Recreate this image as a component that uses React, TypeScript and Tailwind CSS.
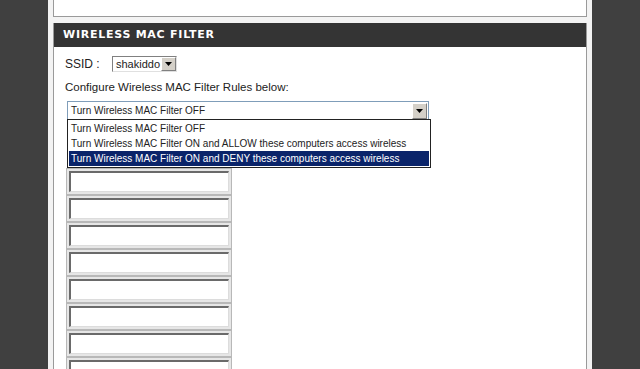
const font = { fontFamily: '"Liberation Sans", Arial, sans-serif' };

function Arrow() {
  return (
    <div className="flex h-full w-[15px] items-center justify-center border border-t-white border-l-white border-r-[#808080] border-b-[#808080] bg-[#d4d0c8]">
      <svg width="7" height="4" viewBox="0 0 7 4">
        <path d="M0 0H7L3.5 4Z" fill="#000" />
      </svg>
    </div>
  );
}

const options = [
  "Turn Wireless MAC Filter OFF",
  "Turn Wireless MAC Filter ON and ALLOW these computers access wireless",
  "Turn Wireless MAC Filter ON and DENY these computers access wireless",
];

export default function App() {
  return (
    <div className="flex h-[369px] w-[640px] overflow-hidden bg-[#f3f3f3] text-[10px] text-[#222]" style={font}>
      <div className="w-[48px] shrink-0 bg-[#404040]" />
      <div className="w-[5px] shrink-0" />
      <div className="flex w-[534px] shrink-0 flex-col">
        <div className="h-[17px] shrink-0 border-x border-b border-[#9a9a9a] bg-white" />
        <div className="h-[6px] shrink-0" />
        <div className="flex flex-1 flex-col border-x border-[#9a9a9a] bg-white">
          <div className="flex h-[24px] shrink-0 items-center bg-[#343434] pl-[9px]">
            <span className="text-[11px] font-bold tracking-[0.75px] text-white" style={{ fontFamily: '"DejaVu Sans", Verdana, sans-serif' }}>
              WIRELESS MAC FILTER
            </span>
          </div>
          <div className="flex flex-col pl-[11px] pt-[9px]">
            <div className="flex h-[16px] items-center">
              <span className="w-[47px] text-[12px]">SSID :</span>
              <div className="flex h-[16px] items-center border border-t-[#808080] border-l-[#808080] border-r-[#e0e0e0] border-b-[#e0e0e0] bg-white pl-[3px]">
                <span className="w-[45px] text-[11px]">shakiddo</span>
                <Arrow />
              </div>
            </div>
            <div className="mt-[8px] text-[11.5px] leading-[15px]">Configure Wireless MAC Filter Rules below:</div>
            <div className="relative ml-[2px] mt-[6px] w-[362px]">
              <div className="flex h-[19px] items-center border border-[#7f9db9] bg-white pl-[3px] pr-px">
                <span className="flex-1">{options[0]}</span>
                <div className="h-[16px]">
                  <Arrow />
                </div>
              </div>
              <div className="absolute left-0 top-[18px] z-10 w-[364px] border border-[#222] bg-white p-px">
                {options.map((o, i) => (
                  <div
                    key={o}
                    className={`h-[15px] whitespace-nowrap pl-[2px] leading-[15px] ${i === 2 ? "bg-[#0a246a] text-white" : ""}`}
                  >
                    {o}
                  </div>
                ))}
              </div>
            </div>
            <div className="ml-[1px] mt-[48px] flex w-[166px] flex-col">
              {Array.from({ length: 8 }).map((_, i) => (
                <div key={i} className="h-[27px] shrink-0 border border-[#b8b8b8] bg-[#e6e6e6] p-[2px]">
                  <div className="h-full border-t-2 border-l-2 border-t-[#6a6a6a] border-l-[#6a6a6a] border-b border-r border-b-[#dcdcdc] border-r-[#dcdcdc] bg-white" />
                </div>
              ))}
            </div>
          </div>
        </div>
      </div>
      <div className="w-[5px] shrink-0" />
      <div className="flex-1 bg-[#404040]" />
    </div>
  );
}
